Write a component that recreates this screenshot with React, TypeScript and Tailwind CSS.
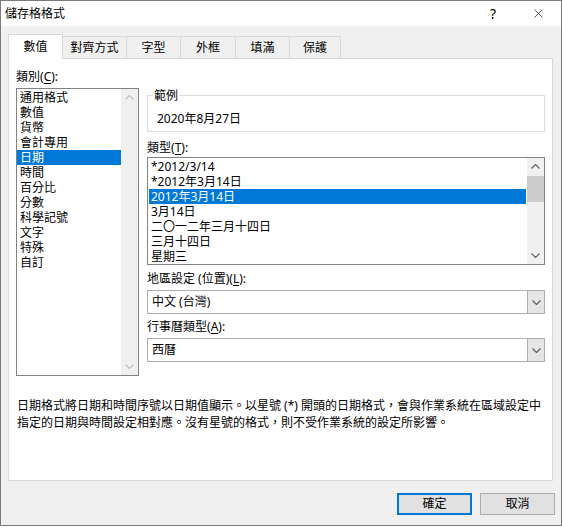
import { X } from "lucide-react";

const categories = ["通用格式", "數值", "貨幣", "會計專用", "日期", "時間", "百分比", "分數", "科學記號", "文字", "特殊", "自訂"];
const dateTypes = ["*2012/3/14", "*2012年3月14日", "2012年3月14日", "3月14日", "二〇一二年三月十四日", "三月十四日", "星期三"];
const tabs = [
  { label: "數值", w: "w-[55px]" },
  { label: "對齊方式", w: "w-[64px]" },
  { label: "字型", w: "w-[54px]" },
  { label: "外框", w: "w-[55px]" },
  { label: "填滿", w: "w-[54px]" },
  { label: "保護", w: "w-[51px]" },
];

const Chevron = ({ up, color }: { up?: boolean; color: string }) => (
  <svg width="9" height="5" viewBox="0 0 9 5" fill="none">
    <polyline
      points={up ? "0.5,4.5 4.5,0.5 8.5,4.5" : "0.5,0.5 4.5,4.5 8.5,0.5"}
      stroke={color}
      strokeWidth="1.2"
    />
  </svg>
);

// label with an underlined access key, e.g. 類別(C):
const KeyLabel = ({ text, k }: { text: string; k: string }) => (
  <div className="h-[15px] leading-[15px] whitespace-nowrap">
    {text}(<span className="underline underline-offset-2">{k}</span>):
  </div>
);

const ComboBox = ({ value }: { value: string }) => (
  <div className="flex h-[24px] border border-[#adadad] bg-white">
    <div className="flex flex-1 items-center pl-[4px]">{value}</div>
    <div className="flex w-[17px] items-center justify-center border-l border-[#adadad] bg-[#e5e5e5]">
      <Chevron color="#606060" />
    </div>
  </div>
);

export default function App() {
  return (
    <div className="flex h-[526px] w-[562px] flex-col border border-[#7a7a7a] bg-[#f0f0f0] text-[12px] text-black font-['Noto_Sans','Noto_Sans_CJK_TC',sans-serif]">
      {/* title bar */}
      <div className="flex h-[25px] items-center bg-white">
        <div className="flex-1 pl-[4px]">儲存格格式</div>
        <div className="flex h-full w-[46px] items-center justify-center text-[14px]">?</div>
        <div className="flex h-full w-[45px] items-center justify-center">
          <X size={15} strokeWidth={1} color="#000" />
        </div>
      </div>

      {/* tabs */}
      <div className="mt-[8px] ml-[7px] flex h-[25px] items-end">
        {tabs.map((t, i) =>
          i === 0 ? (
            <div
              key={t.label}
              className={`relative z-10 flex h-[25px] ${t.w} items-center justify-center border-x border-t border-[#d9d9d9] bg-white`}
            >
              {t.label}
            </div>
          ) : (
            <div
              key={t.label}
              className={`mb-[1px] flex h-[22px] ${t.w} items-center justify-center border-t border-r border-[#d9d9d9] bg-[#f0f0f0]`}
            >
              {t.label}
            </div>
          )
        )}
      </div>

      {/* tab page */}
      <div className="-mt-[1px] ml-[7px] h-[423px] w-[545px] border border-[#d9d9d9] bg-white">
        <div className="flex items-start">
          <div className="pt-[10px] pl-[7px]">
            <KeyLabel text="類別" k="C" />
            <div className="mt-[4px] flex h-[288px] w-[123px] border border-[#828282]">
              <div className="flex-1 pt-[1px]">
                {categories.map((c) => (
                  <div
                    key={c}
                    className={`h-[15px] pl-[3px] leading-[15px] ${c === "日期" ? "bg-[#0078d7] text-white" : ""}`}
                  >
                    {c}
                  </div>
                ))}
              </div>
              <div className="flex w-[17px] flex-col bg-[#f0f0f0]">
                <div className="flex h-[17px] items-center justify-center">
                  <Chevron up color="#c0c0c0" />
                </div>
                <div className="flex-1" />
                <div className="flex h-[17px] items-center justify-center">
                  <Chevron color="#c0c0c0" />
                </div>
              </div>
            </div>
          </div>

          <div className="ml-[8px] w-[398px] pt-[29px]">
            <fieldset className="border border-[#dcdcdc]">
              <legend className="ml-[5px] px-[1px] leading-[15px]">範例</legend>
              <div className="pt-[8px] pb-[5px] pl-[9px] leading-[15px]">2020年8月27日</div>
            </fieldset>

            <div className="mt-[8px] mb-[2px]">
              <KeyLabel text="類型" k="T" />
            </div>
            <div className="flex h-[108px] border border-[#828282]">
              <div className="flex-1 px-[1px] pt-[1px]">
                {dateTypes.map((d) => (
                  <div
                    key={d}
                    className={`h-[15px] pl-[2px] leading-[15px] whitespace-nowrap ${d === "2012年3月14日" ? "bg-[#0078d7] text-white" : ""}`}
                  >
                    {d}
                  </div>
                ))}
              </div>
              <div className="flex w-[17px] flex-col bg-[#f0f0f0]">
                <div className="flex h-[17px] items-center justify-center">
                  <Chevron up color="#606060" />
                </div>
                <div className="mt-[1px] h-[26px] bg-[#cdcdcd]" />
                <div className="flex-1" />
                <div className="flex h-[17px] items-center justify-center">
                  <Chevron color="#606060" />
                </div>
              </div>
            </div>

            <div className="mt-[6px] mb-[4px]">
              <KeyLabel text="地區設定 (位置)" k="L" />
            </div>
            <ComboBox value="中文 (台灣)" />

            <div className="mt-[5px] mb-[4px]">
              <KeyLabel text="行事曆類型" k="A" />
            </div>
            <ComboBox value="西曆" />
          </div>
        </div>

        <div className="mt-[21px] pl-[8px] leading-[17px] whitespace-nowrap">
          <div>日期格式將日期和時間序號以日期值顯示。以星號 (*) 開頭的日期格式，會與作業系統在區域設定中</div>
          <div>指定的日期與時間設定相對應。沒有星號的格式，則不受作業系統的設定所影響。</div>
        </div>
      </div>

      {/* dialog buttons */}
      <div className="mt-[12px] flex justify-end gap-[8px] pr-[6px]">
        <button className="h-[22px] w-[75px] border-2 border-[#0078d7] bg-[#e1e1e1]">確定</button>
        <button className="h-[22px] w-[75px] border border-[#adadad] bg-[#e1e1e1]">取消</button>
      </div>
    </div>
  );
}
